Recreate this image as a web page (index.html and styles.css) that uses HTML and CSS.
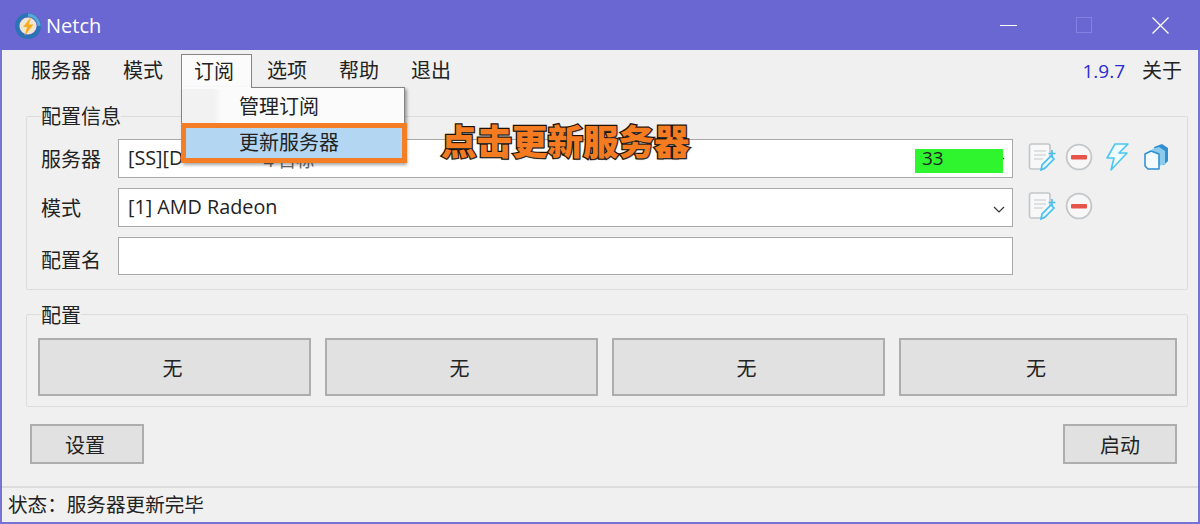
FILE: index.html
```html
<!DOCTYPE html>
<html lang="zh">
<head>
<meta charset="utf-8">
<title>Netch</title>
<link rel="stylesheet" href="styles.css">
</head>
<body>
<div class="window">
  <header class="titlebar">
    <svg class="app-icon" viewBox="0 0 26 26" width="26" height="26">
      <circle cx="13" cy="13" r="11" fill="none" stroke="#2a74b5" stroke-width="4"/>
      <path d="M13 2a11 11 0 0 1 11 11" fill="none" stroke="#5aa6dc" stroke-width="3"/>
      <circle cx="13" cy="13" r="8.500" fill="#efe6d2"/>
      <path d="M16 4 L8 14 H12 L9.500 23 L18.500 11.500 H14 Z" fill="#f6ad1d"/>
    </svg>
    <span class="app-name">Netch</span>
    <div class="win-controls">
      <span class="win-btn"><i class="min"></i></span>
      <span class="win-btn"><i class="max"></i></span>
      <span class="win-btn">
        <svg viewBox="0 0 17 17" width="17" height="17"><path d="M.5.5l16 16M16.500.5l-16 16" stroke="#fff" stroke-width="1.300" fill="none"/></svg>
      </span>
    </div>
  </header>

  <nav class="menubar">
    <span class="menu-item">服务器</span>
    <span class="menu-item">模式</span>
    <span class="menu-item open">订阅</span>
    <span class="menu-item">选项</span>
    <span class="menu-item">帮助</span>
    <span class="menu-item">退出</span>
    <span class="version">1.9.7</span>
    <span class="about">关于</span>
  </nav>

  <main class="content">
    <fieldset class="group info">
      <legend>配置信息</legend>
      <div class="row">
        <label>服务器</label>
        <div class="select"><span class="sel-text">[SS][D</span><span class="sel-hidden">4 目标</span><svg class="chev" viewBox="0 0 12 7" width="12" height="7"><path d="M1 1l5 5 5-5" fill="none" stroke="#333" stroke-width="1.200"/></svg><span class="ping">33</span></div>
        <div class="tools">
          <svg class="ico" viewBox="0 0 28 28" width="28" height="28"><use href="#i-edit"/></svg>
          <svg class="ico" viewBox="0 0 28 28" width="28" height="28"><use href="#i-del"/></svg>
          <svg class="ico bolt" viewBox="0 0 28 28" width="28" height="28"><path d="M25 1H12L4 15h7L8 27 24 10h-8z" fill="#eefbff" stroke="#4cc6f2" stroke-width="1.600" stroke-linejoin="round"/></svg>
          <svg class="ico copy" viewBox="0 0 28 28" width="28" height="28"><path d="M12 4l8-3 6 4v13l-4 4-6-2z" fill="#2f8fd0"/><path d="M10 6l7-2 6 4v13l-9 3z" fill="#8ccbec"/><path d="M3 11l6-3 8 3v15H6l-3-3z" fill="#f4fbff" stroke="#2b8fd0" stroke-width="1.500" stroke-linejoin="round"/></svg>
        </div>
      </div>
      <div class="row">
        <label>模式</label>
        <div class="select"><span class="sel-text">[1] AMD Radeon</span><svg class="chev" viewBox="0 0 12 7" width="12" height="7"><path d="M1 1l5 5 5-5" fill="none" stroke="#333" stroke-width="1.200"/></svg></div>
        <div class="tools">
          <svg class="ico" viewBox="0 0 28 28" width="28" height="28"><use href="#i-edit"/></svg>
          <svg class="ico" viewBox="0 0 28 28" width="28" height="28"><use href="#i-del"/></svg>
        </div>
      </div>
      <div class="row last">
        <label>配置名</label>
        <div class="select input"></div>
      </div>
    </fieldset>

    <fieldset class="group profiles">
      <legend>配置</legend>
      <div class="profile-row">
        <button class="btn">无</button>
        <button class="btn">无</button>
        <button class="btn">无</button>
        <button class="btn wide">无</button>
      </div>
    </fieldset>

    <div class="actions">
      <button class="btn action">设置</button>
      <button class="btn action">启动</button>
    </div>
  </main>

  <footer class="status">状态&#xFF1A;服务器更新完毕</footer>

  <div class="dropdown">
    <div class="drop-item first">管理订阅</div>
    <div class="drop-item active">更新服务器</div>
  </div>
  <div class="callout">点击更新服务器</div>
</div>

<svg class="defs" width="0" height="0">
  <defs>
    <g id="i-edit">
      <path d="M1.500 3a2 2 0 0 1 2-2H20a2 2 0 0 1 2 2V19l-6 7H3.500a2 2 0 0 1-2-2z" fill="#f8f8f8" stroke="#c2c6ca" stroke-width="1.600"/>
      <path d="M6 8h12M6 12h12M6 16h9" stroke="#d5d8da" stroke-width="1.500"/>
      <path d="M13 27l1-5 9-9 3 3-9 9z" fill="#e8f8ff" stroke="#45bff0" stroke-width="1.600"/>
      <path d="M24 7v7M20.500 10.500h7" stroke="#45bff0" stroke-width="1.600"/>
    </g>
    <g id="i-del">
      <circle cx="14" cy="14" r="12.400" fill="#f7f7f7" stroke="#c3c7c9" stroke-width="1.800"/>
      <rect x="6" y="12" width="16" height="4.500" rx="1" fill="#e7544a"/>
    </g>
  </defs>
</svg>
</body>
</html>
```
FILE: styles.css
```css
* { box-sizing: border-box; }
html, body { margin: 0; padding: 0; height: 100%; }
body {
  font-family: "Open Sans", "Noto Sans CJK SC", sans-serif;
  font-size: 20px;
  color: #222;
  background: #f0f0f0;
  overflow: hidden;
}
.defs { position: absolute; }
.window {
  position: relative;
  width: 1200px;
  height: 524px;
  display: flex;
  flex-direction: column;
  border: 2px solid #7673d6;
  border-top: 0;
  background: #f0f0f0;
}
.titlebar {
  height: 50px;
  flex: none;
  margin: 0 -2px;
  background: #6a67d2;
  display: flex;
  align-items: center;
  padding-left: 15px;
  color: #fff;
}
.app-icon { flex: none; margin-top: 2px; }
.app-name { margin: 2px 0 0 5px; font-size: 20px; line-height: 1; }
.win-controls { margin-left: auto; margin-right: 2px; display: flex; }
.win-btn { width: 76px; height: 48px; display: flex; align-items: center; justify-content: center; }
.min { display: block; width: 17px; height: 1px; background: #fff; }
.max { display: block; width: 16px; height: 16px; border: 1px solid #8583e2; }

.menubar {
  height: 42px;
  flex: none;
  display: flex;
  align-items: flex-start;
  padding: 4px 16px 0 13px;
  font-size: 20px;
}
.menu-item {
  height: 34px;
  padding: 0 16px;
  line-height: 34px;
  white-space: nowrap;
}
.menu-item.open {
  border: 1px solid #858585;
  border-bottom: 0;
  padding: 0 17px 0 12px;
  margin: 0 -1px 0 2px;
  background: #fbfbfb;
}
.version { margin-left: auto; color: #2b2bd6; font-family: "Open Sans", sans-serif; font-size: 19px; line-height: 34px; }
.about { margin-left: 17px; line-height: 34px; }

.content {
  flex: 1;
  display: flex;
  flex-direction: column;
  padding: 0 10px 0 24px;
}
.group {
  margin: 0;
  border: 1px solid #dcdcdc;
  border-radius: 2px;
  min-width: 0;
}
.group legend {
  padding: 2px 0 0;
  line-height: 26px;
  font-size: 20px;
}
.info { height: 188px; margin-top: 10px; padding: 9px 0 0 14px; }
.profiles legend { margin-left: 3px; padding: 3px 0 0; }
.row { display: flex; align-items: center; height: 39px; margin-bottom: 10px; }
.row.last { height: 38px; margin: 0; }
.row label { width: 77px; flex: none; }
.row.last label { padding-top: 6px; }
.select {
  position: relative;
  width: 895px;
  height: 100%;
  flex: none;
  background: #fff;
  border: 1px solid #a9a9a9;
  display: flex;
  align-items: center;
  padding: 0 0 2px 9px;
  font-size: 19.750px;
  white-space: nowrap;
}
.sel-hidden { margin: 2px 0 0 80px; color: #666; font-size: 18px; }
.ping {
  position: absolute;
  left: 796px;
  top: 9px;
  width: 88px;
  height: 24px;
  padding-left: 7px;
  background: #2ff52f;
  line-height: 18px;
  font-size: 19px;
}
.chev { position: absolute; right: 7px; top: 17px; }
.tools { display: flex; gap: 9px; margin: 0 0 3px 15px; }
.ico { flex: none; }
.bolt { margin-left: 1px; }
.copy { margin-left: 2px; }

.profiles { height: 107px; margin-top: 10px; padding: 0 10px 0 11px; }
.profile-row { display: flex; gap: 14px; margin-top: 9px; }
.btn {
  font: inherit;
  color: #222;
  background: #e1e1e1;
  border: 2px solid #adadad;
  padding: 0 4px 0 0;
}
.profile-row .btn { width: 273px; height: 58px; }
.profile-row .btn.wide { width: 278px; }
.actions { display: flex; justify-content: space-between; margin-top: 17px; padding: 0 11px 0 4px; }
.btn.action { width: 114px; height: 40px; }
.btn.action:last-child { padding: 0; }
.status {
  flex: none;
  height: 36px;
  margin-top: auto;
  border-top: 2px solid #dcdcdc;
  padding-left: 6px;
  line-height: 33px;
  font-size: 19.600px;
}

.dropdown {
  position: absolute;
  left: 179px;
  top: 87px;
  width: 224px;
  height: 76px;
  background: #fbfbfb;
  border: 1px solid #858585;
  box-shadow: 2px 2px 3px rgba(0,0,0,.35);
  padding-top: 1px;
}
.dropdown::before {
  content: "";
  position: absolute;
  left: 0;
  top: -1px;
  width: 69px;
  height: 1px;
  background: #fbfbfb;
}
.drop-item { height: 34px; padding-left: 57px; line-height: 36px; font-size: 20px; }
.drop-item.first { background: linear-gradient(90deg, #f2f2f2 0, #f2f2f2 32px, #fbfbfb 40px); }
.drop-item.active {
  height: 40px;
  margin-left: -1px;
  width: 226px;
  background: #b3d6f2;
  border: 5px solid #f47e25;
  padding-left: 53px;
  line-height: 30px;
}
.callout {
  position: absolute;
  left: 439px;
  top: 117px;
  font-size: 35.500px;
  line-height: 48px;
  font-weight: 900;
  white-space: nowrap;
  color: #f47b20;
  -webkit-text-stroke: 2.500px #1c1208;
  paint-order: stroke fill;
  text-shadow: 1px 1px 1px #333;
}
```
